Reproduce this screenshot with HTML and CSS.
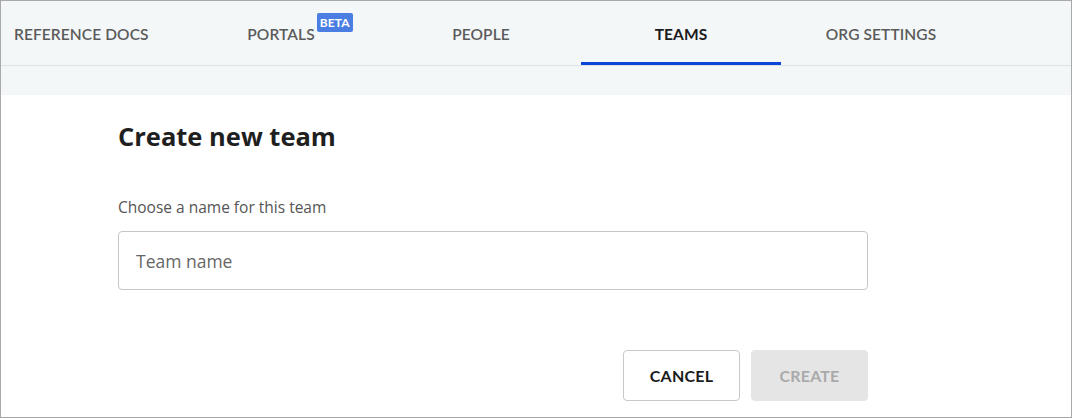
FILE: index.html
```html
<!DOCTYPE html>
<html>
<head>
<meta charset="utf-8">
<link rel="stylesheet" href="styles.css">
</head>
<body>
<div class="frame">
  <nav class="tabs">
    <div class="tab first">REFERENCE DOCS</div>
    <div class="tab"><span class="label">PORTALS<span class="badge">BETA</span></span></div>
    <div class="tab">PEOPLE</div>
    <div class="tab active">TEAMS</div>
    <div class="tab">ORG SETTINGS</div>
  </nav>
  <div class="band"></div>
  <main class="content">
    <h1 class="title">Create new team</h1>
    <label class="field-label">Choose a name for this team</label>
    <div class="input"><span class="placeholder">Team name</span></div>
    <div class="actions">
      <button class="btn cancel">CANCEL</button>
      <button class="btn create">CREATE</button>
    </div>
  </main>
</div>
</body>
</html>
```
FILE: styles.css
```css
* { box-sizing: border-box; }
html, body { margin: 0; padding: 0; }
body {
  font-family: Lato, "Noto Sans", sans-serif;
  background: #fff;
}
.frame {
  width: 1072px;
  height: 418px;
  border: 1px solid #a9a9a9;
  overflow: hidden;
  background: #fff;
}
.tabs {
  display: flex;
  height: 65px;
  background: #f4f7f8;
  border-bottom: 1px solid #dde2e8;
}
.tab {
  width: 200px;
  flex: none;
  display: flex;
  align-items: center;
  justify-content: center;
  font-size: 15.5px;
  font-weight: 600;
  color: #5a5a5a;
  letter-spacing: 0.1px;
  padding-top: 4px;
  border-bottom: 3px solid transparent;
}
.tab.first {
  width: 180px;
  justify-content: flex-start;
  padding-left: 13px;
}
.tab.active {
  color: #1b1b1b;
  font-weight: 700;
  border-bottom-color: #0a46d8;
}
.label { position: relative; }
.badge {
  position: absolute;
  left: 100%;
  top: -12px;
  margin-left: 2px;
  background: #4b7ee3;
  color: #fff;
  font-size: 12px;
  font-weight: 700;
  line-height: 19px;
  height: 19px;
  padding: 0 3px;
  border-radius: 2px;
}
.band {
  height: 29px;
  background: #f4f7f8;
}
.content {
  padding: 0 203px 0 117px;
  font-family: "Open Sans", Lato, sans-serif;
}
.title {
  margin: 24px 0 0;
  font-size: 25.5px;
  font-weight: 700;
  color: #1f1f1f;
  line-height: 34px;
}
.field-label {
  display: block;
  margin-top: 43px;
  font-size: 15.5px;
  color: #555;
  line-height: 22px;
}
.input {
  margin-top: 13px;
  height: 59px;
  border: 1px solid #c6c6c6;
  border-radius: 4px;
  display: flex;
  align-items: center;
  padding-left: 17px;
}
.placeholder {
  font-size: 17.5px;
  color: #666;
}
.actions {
  display: flex;
  justify-content: flex-end;
  gap: 11px;
  margin-top: 60px;
}
.btn {
  font-family: Lato, "Noto Sans", sans-serif;
  height: 51px;
  width: 117px;
  font-size: 16px;
  font-weight: 700;
  border-radius: 4px;
  letter-spacing: 0.2px;
}
.cancel {
  background: #fff;
  border: 1px solid #c8c8c8;
  color: #1b1b1b;
}
.create {
  background: #e5e5e5;
  border: 1px solid #e5e5e5;
  color: #aaa;
}
```
